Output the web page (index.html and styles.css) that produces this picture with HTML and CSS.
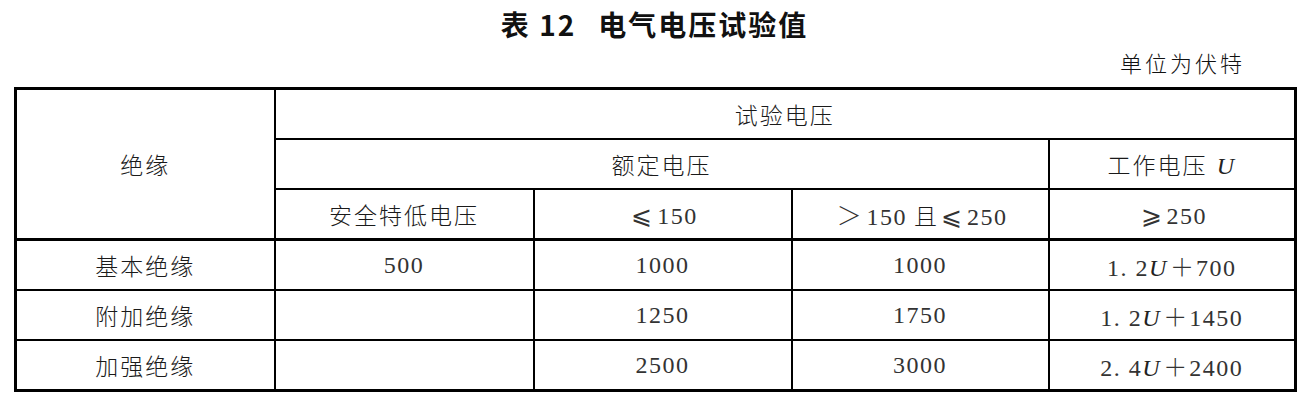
FILE: index.html
```html
<!DOCTYPE html>
<html lang="zh-CN">
<head>
<meta charset="utf-8">
<title>表 12 电气电压试验值</title>
<link rel="stylesheet" href="styles.css">
</head>
<body>
<div class="page">
  <h1 class="caption">表 12<span class="gap"></span>电气电压试验值</h1>
  <div class="unit">单位为伏特</div>
  <table class="grid">
    <colgroup>
      <col class="c1"><col class="c2"><col class="c3"><col class="c4"><col class="c5">
    </colgroup>
    <thead>
      <tr class="r1">
        <th rowspan="3" class="lbl">绝缘</th>
        <th colspan="4">试验电压</th>
      </tr>
      <tr class="r2">
        <th colspan="3">额定电压</th>
        <th>工作电压 <i class="u">U</i></th>
      </tr>
      <tr class="r3">
        <th><span class="txt">安全特低电压</span></th>
        <th><span class="sym">⩽</span><span class="num">150</span></th>
        <th><span class="sym">＞</span><span class="num">150</span> <span class="qie">且</span><span class="sym">⩽</span><span class="num">250</span></th>
        <th><span class="sym">⩾</span><span class="num">250</span></th>
      </tr>
    </thead>
    <tbody>
      <tr class="first">
        <td class="lbl">基本绝缘</td>
        <td class="num">500</td>
        <td class="num">1000</td>
        <td class="num">1000</td>
        <td class="num">1. 2<i class="u">U</i><span class="plus">＋</span>700</td>
      </tr>
      <tr>
        <td class="lbl">附加绝缘</td>
        <td></td>
        <td class="num">1250</td>
        <td class="num">1750</td>
        <td class="num">1. 2<i class="u">U</i><span class="plus">＋</span>1450</td>
      </tr>
      <tr>
        <td class="lbl">加强绝缘</td>
        <td></td>
        <td class="num">2500</td>
        <td class="num">3000</td>
        <td class="num">2. 4<i class="u">U</i><span class="plus">＋</span>2400</td>
      </tr>
    </tbody>
  </table>
</div>
</body>
</html>
```
FILE: styles.css
```css
html, body {
  margin: 0;
  padding: 0;
  background: #fff;
}

.page {
  width: 1309px;
  height: 404px;
  padding-top: 6px;
  box-sizing: border-box;
  color: #111;
  font-family: "Noto Sans CJK SC", "Noto Sans", sans-serif;
}

.caption {
  margin: 0;
  height: 36px;
  line-height: 36px;
  text-align: center;
  font-size: 28px;
  font-weight: 700;
  letter-spacing: 2px;
  color: #111;
}

.caption .gap {
  display: inline-block;
  width: 22px;
}

.unit {
  height: 40px;
  line-height: 40px;
  padding-right: 64px;
  text-align: right;
  font-size: 22px;
  letter-spacing: 3px;
  font-weight: 300;
}

.grid {
  margin-left: 14px;
  width: 1280px;
  table-layout: fixed;
  border-collapse: collapse;
  border: 3px solid #000;
  margin-top: 5px;
}

.c1 { width: 259px; }
.c2 { width: 259px; }
.c3 { width: 258px; }
.c4 { width: 257px; }
.c5 { width: 247px; }

.grid th,
.grid td {
  border: 2px solid #000;
  height: 48px;
  padding: 0;
  text-align: center;
  vertical-align: middle;
  font-weight: 300;
  font-size: 23px;
  letter-spacing: 2px;
  color: #1a1a1a;
}

.grid tbody tr.first td {
  border-top-width: 3px;
}

.num,
.grid td.num {
  font-family: "Liberation Serif", "DejaVu Serif", serif;
  font-size: 24px;
  letter-spacing: 1.5px;
  color: #333;
}

.sym {
  font-family: "DejaVu Sans", "Noto Sans CJK SC", sans-serif;
  font-weight: 300;
  font-size: 25px;
  letter-spacing: 0;
  color: #333;
  margin: 0 5px 0 4px;
}

.qie {
  letter-spacing: 0;
}

.plus {
  font-family: "Noto Sans CJK SC", sans-serif;
  font-weight: 300;
  font-size: 24px;
  margin: 0 2px;
  letter-spacing: 0;
}

.u {
  font-family: "Liberation Serif", serif;
  font-style: italic;
  font-size: 24px;
  color: #222;
}

.r2 .u {
  margin-left: 2px;
}
```
